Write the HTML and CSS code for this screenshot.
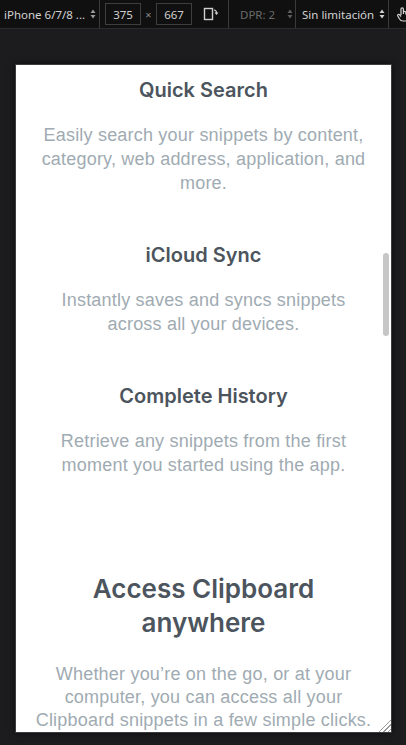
FILE: index.html
```html
<!DOCTYPE html>
<html lang="en">
<head>
<meta charset="utf-8">
<title>Clipboard</title>
<link rel="stylesheet" href="styles.css">
</head>
<body>
<div class="toolbar">
  <div class="tb-group tb-device">
    <span>iPhone 6/7/8 ...</span>
    <svg class="updown" width="6" height="10" viewBox="0 0 6 10"><path d="M3 0.5 L5.5 4 H0.5 Z M3 9.5 L5.5 6 H0.5 Z" fill="currentColor"/></svg>
  </div>
  <div class="tb-group tb-size">
    <span class="tb-input">375</span>
    <span class="tb-times">×</span>
    <span class="tb-input">667</span>
    <svg class="rotate" width="16" height="14" viewBox="0 0 16 14"><rect x="1.5" y="1.5" width="8" height="11" fill="none" stroke="currentColor" stroke-width="1.4"/><path d="M11 3 Q13.5 3 13.5 6" fill="none" stroke="currentColor" stroke-width="1.2"/><path d="M11.5 5.5 H15.5 L13.5 8 Z" fill="currentColor"/></svg>
  </div>
  <div class="tb-group tb-dpr">
    <span>DPR: 2</span>
    <svg class="updown" width="6" height="10" viewBox="0 0 6 10"><path d="M3 0.5 L5.5 4 H0.5 Z M3 9.5 L5.5 6 H0.5 Z" fill="currentColor"/></svg>
  </div>
  <div class="tb-group tb-throttle">
    <span>Sin limitación</span>
    <svg class="updown" width="6" height="10" viewBox="0 0 6 10"><path d="M3 0.5 L5.5 4 H0.5 Z M3 9.5 L5.5 6 H0.5 Z" fill="currentColor"/></svg>
  </div>
  <div class="tb-group tb-touch">
    <svg width="14" height="16" viewBox="0 0 14 16"><path d="M5 9 V3 a1.2 1.2 0 0 1 2.4 0 V8 V6.5 a1.2 1.2 0 0 1 2.4 0 V8.5 V7.5 a1.2 1.2 0 0 1 2.4 0 V11 Q12.2 15 8.5 15 H7 Q4.5 15 3.2 12.5 L1.8 10 a1.1 1.1 0 0 1 1.9 -1.1 L5 10.5" fill="none" stroke="currentColor" stroke-width="1.2"/></svg>
  </div>
</div>

<div class="stage">
  <div class="viewport">
    <main class="page">
      <section class="feature">
        <h3 class="feature-title">Quick Search</h3>
        <p class="feature-text">Easily search your snippets by content, category, web address, application, and more.</p>
      </section>
      <section class="feature">
        <h3 class="feature-title">iCloud Sync</h3>
        <p class="feature-text">Instantly saves and syncs snippets across all your devices.</p>
      </section>
      <section class="feature">
        <h3 class="feature-title">Complete History</h3>
        <p class="feature-text">Retrieve any snippets from the first moment you started using the app.</p>
      </section>
      <section class="access">
        <h2 class="access-title">Access Clipboard anywhere</h2>
        <p class="access-text">Whether you’re on the go, or at your computer, you can access all your Clipboard snippets in a few simple clicks.</p>
      </section>
    </main>
    <div class="scrollbar"></div>
    <div class="resizer"></div>
  </div>
</div>
</body>
</html>
```

FILE: styles.css
```css
* { box-sizing: border-box; }

html, body {
  margin: 0;
  padding: 0;
}

body {
  width: 406px;
  height: 745px;
  overflow: hidden;
  background: #1c1c1e;
  font-family: "Noto Sans", "DejaVu Sans", sans-serif;
}

/* ---------- devtools toolbar ---------- */
.toolbar {
  height: 29px;
  background: #101010;
  border-bottom: 1px solid #2b2b2b;
  display: flex;
  align-items: stretch;
  color: #d2d2d2;
  font-size: 11.5px;
  white-space: nowrap;
  overflow: hidden;
}

.tb-group {
  display: flex;
  align-items: center;
  border-right: 1px solid #3a3a3a;
  flex-shrink: 0;
}

.tb-device {
  width: 100px;
  padding-left: 4px;
  gap: 5px;
}

.updown {
  color: #9a9a9a;
}

.tb-size {
  width: 129px;
  padding-left: 5px;
}

.tb-input {
  width: 36px;
  height: 22px;
  border: 1px solid #3e3e3e;
  display: flex;
  align-items: center;
  justify-content: center;
  color: #cfcfcf;
}

.tb-times {
  width: 15px;
  text-align: center;
  color: #8a8a8a;
  font-size: 11px;
}

.rotate {
  margin-left: 11px;
  color: #d0d0d0;
}

.tb-dpr {
  width: 67px;
  padding-left: 11px;
  gap: 12px;
  color: #6a6a6a;
}

.tb-dpr .updown { color: #5e5e5e; }

.tb-throttle {
  width: 93px;
  padding-left: 6px;
  gap: 5px;
}

.tb-throttle .updown { color: #cfcfcf; }

.tb-touch {
  border-right: none;
  padding-left: 7px;
  color: #d0d0d0;
}

/* ---------- device stage ---------- */
.stage {
  padding: 35px 0 0 15px;
}

.viewport {
  position: relative;
  width: 377px;
  height: 669px;
  border: 1px solid #3d3d3f;
  background: #ffffff;
  overflow: hidden;
  box-shadow: 0 0 6px rgba(0, 0, 0, 0.6);
}

.page {
  padding: 13px 17px 0;
  text-align: center;
  font-family: "Liberation Sans", Arial, sans-serif;
}

.feature {
  margin-bottom: 48px;
}

.feature-title {
  margin: 0 0 21px;
  font-family: Inter, "Liberation Sans", sans-serif;
  font-size: 20px;
  line-height: 24px;
  font-weight: 600;
  color: #4c545d;
}

.feature-text {
  margin: 0;
  font-size: 18px;
  line-height: 24px;
  letter-spacing: 0.2px;
  color: #9fabb2;
}

.access {
  padding-top: 47px;
}

.access-title {
  margin: 0 auto 23px;
  width: 260px;
  font-family: Inter, "Liberation Sans", sans-serif;
  font-size: 26px;
  line-height: 34px;
  font-weight: 600;
  color: #4c545d;
}

.access-text {
  margin: 0;
  font-size: 18px;
  line-height: 23px;
  letter-spacing: 0.2px;
  color: #9fabb2;
}

/* overlays */
.scrollbar {
  position: absolute;
  top: 188px;
  right: 2px;
  width: 6px;
  height: 83px;
  border-radius: 3px;
  background: #c6c6c6;
}

.resizer {
  position: absolute;
  right: 0;
  bottom: 0;
  width: 14px;
  height: 14px;
  background: repeating-linear-gradient(135deg, transparent 0 2px, #9a9a9a 2px 3px);
  clip-path: polygon(100% 0, 100% 100%, 0 100%);
}
```
